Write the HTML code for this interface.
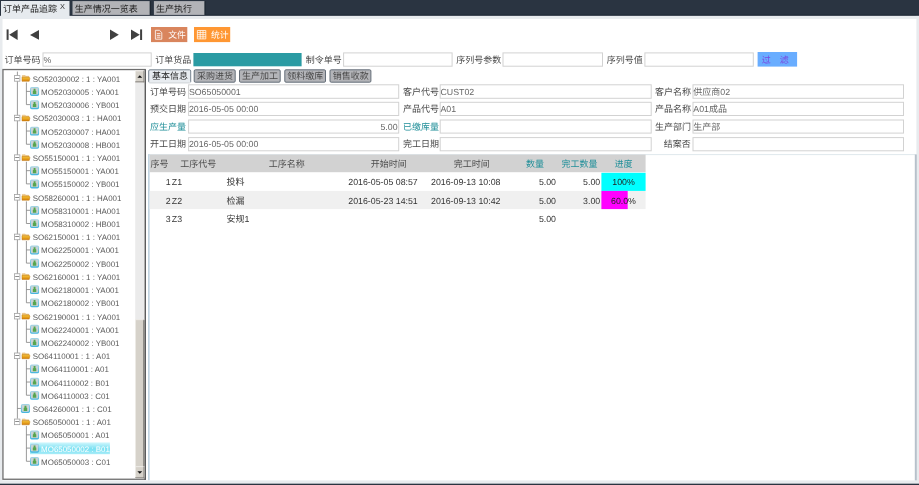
<!DOCTYPE html>
<html lang="zh-CN">
<head>
<meta charset="utf-8">
<title>订单产品追踪</title>
<style>
html,body{margin:0;padding:0}
body{text-rendering:geometricPrecision;width:919px;height:485px;overflow:hidden;position:relative;background:#fff;font-family:"Liberation Sans","Noto Sans CJK SC",sans-serif;font-size:8.8px;color:#494949}
#bg{position:absolute;left:0;top:0;display:block}
#ui{position:absolute;left:0;top:0;width:919px;height:485px;will-change:transform}
.t{position:absolute;white-space:nowrap;line-height:12px;height:12px;margin:0;padding:0}
.c{font-size:9px;font-family:"Liberation Sans","Noto Sans CJK SC",sans-serif}
.c2{font-size:8.8px;font-family:"Liberation Sans","Noto Sans CJK SC",sans-serif}
.tr{font-size:7.94px;color:#5a5a5a;line-height:13px;height:13px}
.sel{color:#fff}
.teal{color:#23909a}
.hd{color:#4e4e4e}
.v{color:#666}

</style>
</head>
<body>
<svg id="bg" width="919" height="485" viewBox="0 0 919 485" aria-hidden="true">
<rect x="0" y="0" width="919" height="485" fill="#fff"/>
<rect x="0" y="0" width="919" height="15.7" fill="#2a3441"/>
<rect x="0" y="15.7" width="919" height="3.2" fill="#e8ebee"/>
<rect x="0" y="15.7" width="2.5" height="467.6" fill="#e8ebee"/>
<rect x="916.4" y="15.7" width="2.6" height="467.6" fill="#e8ebee"/>
<rect x="0" y="14.5" width="919" height="1.2" fill="#212c39"/>
<rect x="0" y="480.4" width="919" height="3.2" fill="#e8ebee"/>
<rect x="0" y="483.8" width="919" height="1.2" fill="#2a3441"/>
<rect x="0" y="483.3" width="919" height="0.5" fill="#8a929b"/>
<rect x="1" y="1" width="68.5" height="18" fill="#e6eaee"/>
<rect x="72.5" y="1.1" width="77.3" height="13.8" fill="#b2b3b7"/>
<rect x="149.8" y="1.1" width="1" height="13.8" fill="#1d2631"/>
<rect x="153.9" y="1.1" width="50.7" height="13.8" fill="#b2b3b7"/>
<rect x="204.6" y="1.1" width="1" height="13.8" fill="#1d2631"/>
<rect x="6.6" y="29.4" width="2" height="10.5" fill="#404040"/>
<path d="M9.2 34.65L17.6 29.4L17.6 39.9Z" fill="#404040"/>
<path d="M30 34.9L39 30L39 39.8Z" fill="#404040"/>
<path d="M118.8 34.8L110 29.6L110 40Z" fill="#404040"/>
<path d="M139.8 34.7L131 29.4L131 40Z" fill="#404040"/>
<rect x="140.1" y="29.4" width="2" height="10.6" fill="#404040"/>
<rect x="151" y="27" width="36.3" height="15.1" fill="#d9855d"/>
<rect x="194" y="27" width="36.2" height="15.1" fill="#ff9733"/>
<path d="M155.4 30.3h4l2.4 2.3v6.6h-6.4zM156.8 33.6h3.6M156.8 35.4h3.6M156.8 37.2h3.6" fill="none" stroke="#fff" stroke-width="0.8"/>
<path d="M197.4 30.5h8.4v8.4h-8.4zM197.4 32.6h8.4M197.4 34.7h8.4M197.4 36.8h8.4M200.2 30.5v8.4M203 30.5v8.4" fill="none" stroke="#fff" stroke-width="0.75"/>
<rect x="43" y="52.9" width="108.2" height="13.3" fill="#fff" stroke="#d2d2d2" stroke-width="1"/>
<rect x="193.4" y="53" width="108.2" height="13.3" fill="#2a9ba3"/>
<rect x="343.6" y="52.9" width="108.5" height="13.3" fill="#fff" stroke="#d2d2d2" stroke-width="1"/>
<rect x="503" y="52.9" width="99.5" height="13.3" fill="#fff" stroke="#d2d2d2" stroke-width="1"/>
<rect x="644.9" y="52.9" width="108.4" height="13.3" fill="#fff" stroke="#d2d2d2" stroke-width="1"/>
<rect x="757.6" y="52" width="39.5" height="14.6" fill="#69adff"/>
<rect x="2.95" y="69.55" width="142.2" height="409.7" fill="#fff" stroke="#6e6e6e" stroke-width="1.3"/>
<rect x="144.5" y="69.4" width="1.5" height="410.5" fill="#5c5c5c"/>
<rect x="135.2" y="70.6" width="9.2" height="407.8" fill="#ebebeb"/>
<rect x="135.2" y="70.6" width="9.2" height="11.7" fill="#d6d2ca"/>
<rect x="135.2" y="70.6" width="9.2" height="0.7" fill="#f4f2ee"/>
<rect x="135.2" y="70.6" width="0.7" height="11.7" fill="#f4f2ee"/>
<rect x="135.2" y="81.4" width="9.2" height="0.9" fill="#7c7a76"/>
<rect x="143.5" y="70.6" width="0.9" height="11.7" fill="#7c7a76"/>
<path d="M137.4 77.85L139.8 75.15L142.2 77.85Z" fill="#111"/>
<rect x="135.2" y="319.4" width="9.2" height="147" fill="#d6d2ca"/>
<rect x="135.2" y="319.4" width="0.7" height="147" fill="#f4f2ee"/>
<rect x="143.5" y="319.4" width="0.9" height="147" fill="#4a4a48"/>
<rect x="135.2" y="319.4" width="9.2" height="0.7" fill="#f4f2ee"/>
<rect x="135.2" y="466.4" width="9.2" height="11.9" fill="#d6d2ca"/>
<rect x="135.2" y="466.4" width="9.2" height="0.7" fill="#f4f2ee"/>
<rect x="135.2" y="466.4" width="0.7" height="11.9" fill="#f4f2ee"/>
<rect x="135.2" y="477.4" width="9.2" height="0.9" fill="#7c7a76"/>
<rect x="143.5" y="466.4" width="0.9" height="11.9" fill="#7c7a76"/>
<path d="M137.4 471.15L139.8 473.85L142.2 471.15Z" fill="#111"/>
<path d="M17.4 71.6L17.4 418.66" stroke="#808080" stroke-width="0.8" fill="none"/>
<defs><linearGradient id="fg" x1="0" y1="0" x2="0" y2="1"><stop offset="0" stop-color="#f8c83c"/><stop offset="1" stop-color="#d67f06"/></linearGradient><linearGradient id="fg2" x1="0" y1="0" x2="0" y2="1"><stop offset="0" stop-color="#fbc85a"/><stop offset="1" stop-color="#e39a1c"/></linearGradient><linearGradient id="mg" x1="0" y1="0" x2="0" y2="1"><stop offset="0" stop-color="#a6d5e5"/><stop offset="1" stop-color="#42b4de"/></linearGradient></defs>
<rect x="14.4" y="75.6" width="5.5" height="5.6" fill="#fff" stroke="#a2a2a2" stroke-width="0.8"/>
<path d="M15.2 78.5L19.2 78.5" stroke="#6e6e6e" stroke-width="0.8" fill="none"/>
<path d="M22.3 75.5h2.9l0.7 0.8h2.9v1.6h-6.5z" fill="#f3cd8c" stroke="#d8a552" stroke-width="0.4"/>
<path d="M22 77.2h7.2l0.7 1.2l-0.7 2.9h-7.2z" fill="url(#fg)" stroke="#bd7714" stroke-width="0.5"/>
<path d="M26.4 82.5L26.4 104.62" stroke="#808080" stroke-width="0.8" fill="none"/>
<path d="M26.4 91.41L30.2 91.41" stroke="#808080" stroke-width="0.8" fill="none"/>
<rect x="30" y="87.06" width="9.1" height="8.9" rx="1.7" fill="url(#mg)"/>
<rect x="31" y="88.01" width="7.1" height="6.6" rx="0.8" fill="#c9d3d7"/>
<path d="M33.6 88.71h1.9v1.8l0.8 0.5v2.9h-3.5v-2.9l0.8 -0.5z" fill="#57a54e"/>
<path d="M26.4 104.62L30.2 104.62" stroke="#808080" stroke-width="0.8" fill="none"/>
<rect x="30" y="100.27" width="9.1" height="8.9" rx="1.7" fill="url(#mg)"/>
<rect x="31" y="101.22" width="7.1" height="6.6" rx="0.8" fill="#c9d3d7"/>
<path d="M33.6 101.92h1.9v1.8l0.8 0.5v2.9h-3.5v-2.9l0.8 -0.5z" fill="#57a54e"/>
<rect x="14.4" y="115.23" width="5.5" height="5.6" fill="#fff" stroke="#a2a2a2" stroke-width="0.8"/>
<path d="M15.2 117.5L19.2 117.5" stroke="#6e6e6e" stroke-width="0.8" fill="none"/>
<path d="M22.3 115.13h2.9l0.7 0.8h2.9v1.6h-6.5z" fill="#f3cd8c" stroke="#d8a552" stroke-width="0.4"/>
<path d="M22 116.83h7.2l0.7 1.2l-0.7 2.9h-7.2z" fill="url(#fg)" stroke="#bd7714" stroke-width="0.5"/>
<path d="M26.4 122.13L26.4 144.25" stroke="#808080" stroke-width="0.8" fill="none"/>
<path d="M26.4 131.04L30.2 131.04" stroke="#808080" stroke-width="0.8" fill="none"/>
<rect x="30" y="126.69" width="9.1" height="8.9" rx="1.7" fill="url(#mg)"/>
<rect x="31" y="127.64" width="7.1" height="6.6" rx="0.8" fill="#c9d3d7"/>
<path d="M33.6 128.34h1.9v1.8l0.8 0.5v2.9h-3.5v-2.9l0.8 -0.5z" fill="#57a54e"/>
<path d="M26.4 144.25L30.2 144.25" stroke="#808080" stroke-width="0.8" fill="none"/>
<rect x="30" y="139.9" width="9.1" height="8.9" rx="1.7" fill="url(#mg)"/>
<rect x="31" y="140.85" width="7.1" height="6.6" rx="0.8" fill="#c9d3d7"/>
<path d="M33.6 141.55h1.9v1.8l0.8 0.5v2.9h-3.5v-2.9l0.8 -0.5z" fill="#57a54e"/>
<rect x="14.4" y="154.86" width="5.5" height="5.6" fill="#fff" stroke="#a2a2a2" stroke-width="0.8"/>
<path d="M15.2 157.5L19.2 157.5" stroke="#6e6e6e" stroke-width="0.8" fill="none"/>
<path d="M22.3 154.76h2.9l0.7 0.8h2.9v1.6h-6.5z" fill="#f3cd8c" stroke="#d8a552" stroke-width="0.4"/>
<path d="M22 156.46h7.2l0.7 1.2l-0.7 2.9h-7.2z" fill="url(#fg)" stroke="#bd7714" stroke-width="0.5"/>
<path d="M26.4 161.76L26.4 183.88" stroke="#808080" stroke-width="0.8" fill="none"/>
<path d="M26.4 170.67L30.2 170.67" stroke="#808080" stroke-width="0.8" fill="none"/>
<rect x="30" y="166.32" width="9.1" height="8.9" rx="1.7" fill="url(#mg)"/>
<rect x="31" y="167.27" width="7.1" height="6.6" rx="0.8" fill="#c9d3d7"/>
<path d="M33.6 167.97h1.9v1.8l0.8 0.5v2.9h-3.5v-2.9l0.8 -0.5z" fill="#57a54e"/>
<path d="M26.4 183.88L30.2 183.88" stroke="#808080" stroke-width="0.8" fill="none"/>
<rect x="30" y="179.53" width="9.1" height="8.9" rx="1.7" fill="url(#mg)"/>
<rect x="31" y="180.48" width="7.1" height="6.6" rx="0.8" fill="#c9d3d7"/>
<path d="M33.6 181.18h1.9v1.8l0.8 0.5v2.9h-3.5v-2.9l0.8 -0.5z" fill="#57a54e"/>
<rect x="14.4" y="194.49" width="5.5" height="5.6" fill="#fff" stroke="#a2a2a2" stroke-width="0.8"/>
<path d="M15.2 197.5L19.2 197.5" stroke="#6e6e6e" stroke-width="0.8" fill="none"/>
<path d="M22.3 194.39h2.9l0.7 0.8h2.9v1.6h-6.5z" fill="#f3cd8c" stroke="#d8a552" stroke-width="0.4"/>
<path d="M22 196.09h7.2l0.7 1.2l-0.7 2.9h-7.2z" fill="url(#fg)" stroke="#bd7714" stroke-width="0.5"/>
<path d="M26.4 201.39L26.4 223.51" stroke="#808080" stroke-width="0.8" fill="none"/>
<path d="M26.4 210.3L30.2 210.3" stroke="#808080" stroke-width="0.8" fill="none"/>
<rect x="30" y="205.95" width="9.1" height="8.9" rx="1.7" fill="url(#mg)"/>
<rect x="31" y="206.9" width="7.1" height="6.6" rx="0.8" fill="#c9d3d7"/>
<path d="M33.6 207.6h1.9v1.8l0.8 0.5v2.9h-3.5v-2.9l0.8 -0.5z" fill="#57a54e"/>
<path d="M26.4 223.51L30.2 223.51" stroke="#808080" stroke-width="0.8" fill="none"/>
<rect x="30" y="219.16" width="9.1" height="8.9" rx="1.7" fill="url(#mg)"/>
<rect x="31" y="220.11" width="7.1" height="6.6" rx="0.8" fill="#c9d3d7"/>
<path d="M33.6 220.81h1.9v1.8l0.8 0.5v2.9h-3.5v-2.9l0.8 -0.5z" fill="#57a54e"/>
<rect x="14.4" y="234.12" width="5.5" height="5.6" fill="#fff" stroke="#a2a2a2" stroke-width="0.8"/>
<path d="M15.2 236.5L19.2 236.5" stroke="#6e6e6e" stroke-width="0.8" fill="none"/>
<path d="M22.3 234.02h2.9l0.7 0.8h2.9v1.6h-6.5z" fill="#f3cd8c" stroke="#d8a552" stroke-width="0.4"/>
<path d="M22 235.72h7.2l0.7 1.2l-0.7 2.9h-7.2z" fill="url(#fg)" stroke="#bd7714" stroke-width="0.5"/>
<path d="M26.4 241.02L26.4 263.14" stroke="#808080" stroke-width="0.8" fill="none"/>
<path d="M26.4 249.93L30.2 249.93" stroke="#808080" stroke-width="0.8" fill="none"/>
<rect x="30" y="245.58" width="9.1" height="8.9" rx="1.7" fill="url(#mg)"/>
<rect x="31" y="246.53" width="7.1" height="6.6" rx="0.8" fill="#c9d3d7"/>
<path d="M33.6 247.23h1.9v1.8l0.8 0.5v2.9h-3.5v-2.9l0.8 -0.5z" fill="#57a54e"/>
<path d="M26.4 263.14L30.2 263.14" stroke="#808080" stroke-width="0.8" fill="none"/>
<rect x="30" y="258.79" width="9.1" height="8.9" rx="1.7" fill="url(#mg)"/>
<rect x="31" y="259.74" width="7.1" height="6.6" rx="0.8" fill="#c9d3d7"/>
<path d="M33.6 260.44h1.9v1.8l0.8 0.5v2.9h-3.5v-2.9l0.8 -0.5z" fill="#57a54e"/>
<rect x="14.4" y="273.75" width="5.5" height="5.6" fill="#fff" stroke="#a2a2a2" stroke-width="0.8"/>
<path d="M15.2 276.5L19.2 276.5" stroke="#6e6e6e" stroke-width="0.8" fill="none"/>
<path d="M22.3 273.65h2.9l0.7 0.8h2.9v1.6h-6.5z" fill="#f3cd8c" stroke="#d8a552" stroke-width="0.4"/>
<path d="M22 275.35h7.2l0.7 1.2l-0.7 2.9h-7.2z" fill="url(#fg)" stroke="#bd7714" stroke-width="0.5"/>
<path d="M26.4 280.65L26.4 302.77" stroke="#808080" stroke-width="0.8" fill="none"/>
<path d="M26.4 289.56L30.2 289.56" stroke="#808080" stroke-width="0.8" fill="none"/>
<rect x="30" y="285.21" width="9.1" height="8.9" rx="1.7" fill="url(#mg)"/>
<rect x="31" y="286.16" width="7.1" height="6.6" rx="0.8" fill="#c9d3d7"/>
<path d="M33.6 286.86h1.9v1.8l0.8 0.5v2.9h-3.5v-2.9l0.8 -0.5z" fill="#57a54e"/>
<path d="M26.4 302.77L30.2 302.77" stroke="#808080" stroke-width="0.8" fill="none"/>
<rect x="30" y="298.42" width="9.1" height="8.9" rx="1.7" fill="url(#mg)"/>
<rect x="31" y="299.37" width="7.1" height="6.6" rx="0.8" fill="#c9d3d7"/>
<path d="M33.6 300.07h1.9v1.8l0.8 0.5v2.9h-3.5v-2.9l0.8 -0.5z" fill="#57a54e"/>
<rect x="14.4" y="313.38" width="5.5" height="5.6" fill="#fff" stroke="#a2a2a2" stroke-width="0.8"/>
<path d="M15.2 316.5L19.2 316.5" stroke="#6e6e6e" stroke-width="0.8" fill="none"/>
<path d="M22.3 313.28h2.9l0.7 0.8h2.9v1.6h-6.5z" fill="#f3cd8c" stroke="#d8a552" stroke-width="0.4"/>
<path d="M22 314.98h7.2l0.7 1.2l-0.7 2.9h-7.2z" fill="url(#fg)" stroke="#bd7714" stroke-width="0.5"/>
<path d="M26.4 320.28L26.4 342.4" stroke="#808080" stroke-width="0.8" fill="none"/>
<path d="M26.4 329.19L30.2 329.19" stroke="#808080" stroke-width="0.8" fill="none"/>
<rect x="30" y="324.84" width="9.1" height="8.9" rx="1.7" fill="url(#mg)"/>
<rect x="31" y="325.79" width="7.1" height="6.6" rx="0.8" fill="#c9d3d7"/>
<path d="M33.6 326.49h1.9v1.8l0.8 0.5v2.9h-3.5v-2.9l0.8 -0.5z" fill="#57a54e"/>
<path d="M26.4 342.4L30.2 342.4" stroke="#808080" stroke-width="0.8" fill="none"/>
<rect x="30" y="338.05" width="9.1" height="8.9" rx="1.7" fill="url(#mg)"/>
<rect x="31" y="339" width="7.1" height="6.6" rx="0.8" fill="#c9d3d7"/>
<path d="M33.6 339.7h1.9v1.8l0.8 0.5v2.9h-3.5v-2.9l0.8 -0.5z" fill="#57a54e"/>
<rect x="14.4" y="353.01" width="5.5" height="5.6" fill="#fff" stroke="#a2a2a2" stroke-width="0.8"/>
<path d="M15.2 355.5L19.2 355.5" stroke="#6e6e6e" stroke-width="0.8" fill="none"/>
<path d="M22.3 352.91h2.9l0.7 0.8h2.9v1.6h-6.5z" fill="#f3cd8c" stroke="#d8a552" stroke-width="0.4"/>
<path d="M22 354.61h7.2l0.7 1.2l-0.7 2.9h-7.2z" fill="url(#fg)" stroke="#bd7714" stroke-width="0.5"/>
<path d="M26.4 359.91L26.4 395.24" stroke="#808080" stroke-width="0.8" fill="none"/>
<path d="M26.4 368.82L30.2 368.82" stroke="#808080" stroke-width="0.8" fill="none"/>
<rect x="30" y="364.47" width="9.1" height="8.9" rx="1.7" fill="url(#mg)"/>
<rect x="31" y="365.42" width="7.1" height="6.6" rx="0.8" fill="#c9d3d7"/>
<path d="M33.6 366.12h1.9v1.8l0.8 0.5v2.9h-3.5v-2.9l0.8 -0.5z" fill="#57a54e"/>
<path d="M26.4 382.03L30.2 382.03" stroke="#808080" stroke-width="0.8" fill="none"/>
<rect x="30" y="377.68" width="9.1" height="8.9" rx="1.7" fill="url(#mg)"/>
<rect x="31" y="378.63" width="7.1" height="6.6" rx="0.8" fill="#c9d3d7"/>
<path d="M33.6 379.33h1.9v1.8l0.8 0.5v2.9h-3.5v-2.9l0.8 -0.5z" fill="#57a54e"/>
<path d="M26.4 395.24L30.2 395.24" stroke="#808080" stroke-width="0.8" fill="none"/>
<rect x="30" y="390.89" width="9.1" height="8.9" rx="1.7" fill="url(#mg)"/>
<rect x="31" y="391.84" width="7.1" height="6.6" rx="0.8" fill="#c9d3d7"/>
<path d="M33.6 392.54h1.9v1.8l0.8 0.5v2.9h-3.5v-2.9l0.8 -0.5z" fill="#57a54e"/>
<path d="M17.4 408.45L21 408.45" stroke="#808080" stroke-width="0.8" fill="none"/>
<rect x="20.9" y="404.1" width="9.1" height="8.9" rx="1.7" fill="url(#mg)"/>
<rect x="21.9" y="405.05" width="7.1" height="6.6" rx="0.8" fill="#c9d3d7"/>
<path d="M24.5 405.75h1.9v1.8l0.8 0.5v2.9h-3.5v-2.9l0.8 -0.5z" fill="#57a54e"/>
<rect x="14.4" y="419.06" width="5.5" height="5.6" fill="#fff" stroke="#a2a2a2" stroke-width="0.8"/>
<path d="M15.2 421.5L19.2 421.5" stroke="#6e6e6e" stroke-width="0.8" fill="none"/>
<path d="M22.3 418.96h2.9l0.7 0.8h2.9v1.6h-6.5z" fill="#f3cd8c" stroke="#d8a552" stroke-width="0.4"/>
<path d="M22 420.66h7.2l0.7 1.2l-0.7 2.9h-7.2z" fill="url(#fg)" stroke="#bd7714" stroke-width="0.5"/>
<path d="M26.4 425.96L26.4 461.29" stroke="#808080" stroke-width="0.8" fill="none"/>
<path d="M26.4 434.87L30.2 434.87" stroke="#808080" stroke-width="0.8" fill="none"/>
<rect x="30" y="430.52" width="9.1" height="8.9" rx="1.7" fill="url(#mg)"/>
<rect x="31" y="431.47" width="7.1" height="6.6" rx="0.8" fill="#c9d3d7"/>
<path d="M33.6 432.17h1.9v1.8l0.8 0.5v2.9h-3.5v-2.9l0.8 -0.5z" fill="#57a54e"/>
<path d="M26.4 448.08L30.2 448.08" stroke="#808080" stroke-width="0.8" fill="none"/>
<rect x="30" y="442.38" width="79.9" height="11.8" fill="url(#sg)"/>
<rect x="30" y="443.73" width="9.1" height="8.9" rx="1.7" fill="url(#mg)"/>
<rect x="31" y="444.68" width="7.1" height="6.6" rx="0.8" fill="#c9d3d7"/>
<path d="M33.6 445.38h1.9v1.8l0.8 0.5v2.9h-3.5v-2.9l0.8 -0.5z" fill="#57a54e"/>
<path d="M26.4 461.29L30.2 461.29" stroke="#808080" stroke-width="0.8" fill="none"/>
<rect x="30" y="456.94" width="9.1" height="8.9" rx="1.7" fill="url(#mg)"/>
<rect x="31" y="457.89" width="7.1" height="6.6" rx="0.8" fill="#c9d3d7"/>
<path d="M33.6 458.59h1.9v1.8l0.8 0.5v2.9h-3.5v-2.9l0.8 -0.5z" fill="#57a54e"/>
<defs><linearGradient id="sg" x1="0" y1="0" x2="0" y2="1"><stop offset="0" stop-color="#d2f7fd"/><stop offset="0.55" stop-color="#78e0f2"/><stop offset="1" stop-color="#a8ecf8"/></linearGradient></defs>
<rect x="148.7" y="69.8" width="42" height="13.1" fill="#e8ecf0" stroke="#76828e" stroke-width="1" rx="1.2"/>
<rect x="148" y="82.4" width="43.4" height="1.2" fill="#fff"/>
<rect x="194.2" y="69.8" width="41" height="12.4" fill="#b3b4b8" stroke="#656e79" stroke-width="1" rx="1.2"/>
<rect x="239.5" y="69.8" width="40.7" height="12.4" fill="#b3b4b8" stroke="#656e79" stroke-width="1" rx="1.2"/>
<rect x="284.8" y="69.8" width="40.7" height="12.4" fill="#b3b4b8" stroke="#656e79" stroke-width="1" rx="1.2"/>
<rect x="330" y="69.8" width="40.9" height="12.4" fill="#b3b4b8" stroke="#656e79" stroke-width="1" rx="1.2"/>
<rect x="188.6" y="84.8" width="210.1" height="13.5" fill="#fff" stroke="#d2d2d2" stroke-width="1"/>
<rect x="440.2" y="84.8" width="211" height="13.5" fill="#fff" stroke="#d2d2d2" stroke-width="1"/>
<rect x="693" y="84.8" width="210.5" height="13.5" fill="#fff" stroke="#d2d2d2" stroke-width="1"/>
<rect x="188.6" y="102.3" width="210.1" height="13.2" fill="#fff" stroke="#d2d2d2" stroke-width="1"/>
<rect x="440.2" y="102.3" width="211" height="13.2" fill="#fff" stroke="#d2d2d2" stroke-width="1"/>
<rect x="693" y="102.3" width="210.5" height="13.2" fill="#fff" stroke="#d2d2d2" stroke-width="1"/>
<rect x="188.6" y="120" width="210.1" height="13.1" fill="#fff" stroke="#d2d2d2" stroke-width="1"/>
<rect x="440.2" y="120" width="211" height="13.1" fill="#fff" stroke="#d2d2d2" stroke-width="1"/>
<rect x="693" y="120" width="210.5" height="13.1" fill="#fff" stroke="#d2d2d2" stroke-width="1"/>
<rect x="188.6" y="137.6" width="210.1" height="13.2" fill="#fff" stroke="#d2d2d2" stroke-width="1"/>
<rect x="440.2" y="137.6" width="211" height="13.2" fill="#fff" stroke="#d2d2d2" stroke-width="1"/>
<rect x="693" y="137.6" width="210.5" height="13.2" fill="#fff" stroke="#d2d2d2" stroke-width="1"/>
<rect x="148.4" y="154.2" width="767" height="0.9" fill="#dbe5ea"/>
<rect x="914.8" y="154.4" width="2" height="326" fill="#b7c1cb"/>
<rect x="148.1" y="154.2" width="1.5" height="326" fill="#bbd0de"/>
<rect x="149.7" y="154.6" width="495.9" height="17.6" fill="#d2d2d2"/>
<rect x="149.7" y="190.9" width="495.9" height="18.2" fill="#f0f0f0"/>
<rect x="601.4" y="172.8" width="44.2" height="18.1" fill="#00ffff"/>
<rect x="601.4" y="190.9" width="26.3" height="18.2" fill="#ff00ff"/>
</svg>
<div id="ui">
<div id="wintabs" role="tablist">
<div class="t" style="left:3.1px;top:3px;color:#222"><span class="c">订单产品追踪</span></div>
<div class="t" style="left:59.9px;top:0px;line-height:13px;height:13px;font-size:7.4px;color:#333">X</div>
<div class="t" style="left:74.7px;top:3px;color:#222"><span class="c">生产情况一览表</span></div>
<div class="t" style="left:156px;top:3px;color:#222"><span class="c">生产执行</span></div>
</div>
<div id="toolbar" role="toolbar">
<div class="t" style="left:168.2px;top:29px;color:#fff"><span class="c2">文件</span></div>
<div class="t" style="left:211px;top:29px;color:#fff"><span class="c2">统计</span></div>
</div>
<div id="filter">
<div class="t" style="left:4.6px;top:54px;"><span class="c">订单号码</span></div>
<div class="t v" style="left:43.6px;top:54px;">%</div>
<div class="t" style="left:155.3px;top:54px;"><span class="c">订单货品</span></div>
<div class="t" style="left:305.7px;top:54px;"><span class="c">制令单号</span></div>
<div class="t" style="left:456.2px;top:54px;"><span class="c">序列号参数</span></div>
<div class="t" style="left:606.7px;top:54px;"><span class="c">序列号值</span></div>
<div class="t" style="left:760.9px;top:54px;color:#7a48e0"><span class="c" style="padding-left:0.9px">过　滤</span></div>
</div>
<div id="tree" role="tree">
<div class="t tr" style="left:32.7px;top:73px;">SO52030002 : 1 : YA001</div>
<div class="t tr" style="left:41.1px;top:86px;">MO52030005 : YA001</div>
<div class="t tr" style="left:41.1px;top:99px;">MO52030006 : YB001</div>
<div class="t tr" style="left:32.7px;top:112px;">SO52030003 : 1 : HA001</div>
<div class="t tr" style="left:41.1px;top:126px;">MO52030007 : HA001</div>
<div class="t tr" style="left:41.1px;top:139px;">MO52030008 : HB001</div>
<div class="t tr" style="left:32.7px;top:152px;">SO55150001 : 1 : YA001</div>
<div class="t tr" style="left:41.1px;top:165px;">MO55150001 : YA001</div>
<div class="t tr" style="left:41.1px;top:178px;">MO55150002 : YB001</div>
<div class="t tr" style="left:32.7px;top:192px;">SO58260001 : 1 : HA001</div>
<div class="t tr" style="left:41.1px;top:205px;">MO58310001 : HA001</div>
<div class="t tr" style="left:41.1px;top:218px;">MO58310002 : HB001</div>
<div class="t tr" style="left:32.7px;top:231px;">SO62150001 : 1 : YA001</div>
<div class="t tr" style="left:41.1px;top:244px;">MO62250001 : YA001</div>
<div class="t tr" style="left:41.1px;top:258px;">MO62250002 : YB001</div>
<div class="t tr" style="left:32.7px;top:271px;">SO62160001 : 1 : YA001</div>
<div class="t tr" style="left:41.1px;top:284px;">MO62180001 : YA001</div>
<div class="t tr" style="left:41.1px;top:297px;">MO62180002 : YB001</div>
<div class="t tr" style="left:32.7px;top:311px;">SO62190001 : 1 : YA001</div>
<div class="t tr" style="left:41.1px;top:324px;">MO62240001 : YA001</div>
<div class="t tr" style="left:41.1px;top:337px;">MO62240002 : YB001</div>
<div class="t tr" style="left:32.7px;top:350px;">SO64110001 : 1 : A01</div>
<div class="t tr" style="left:41.1px;top:363px;">MO64110001 : A01</div>
<div class="t tr" style="left:41.1px;top:377px;">MO64110002 : B01</div>
<div class="t tr" style="left:41.1px;top:390px;">MO64110003 : C01</div>
<div class="t tr" style="left:32.7px;top:403px;">SO64260001 : 1 : C01</div>
<div class="t tr" style="left:32.7px;top:416px;">SO65050001 : 1 : A01</div>
<div class="t tr" style="left:41.1px;top:429px;">MO65050001 : A01</div>
<div class="t tr sel" style="left:41.1px;top:443px;">MO65050002 : B01</div>
<div class="t tr" style="left:41.1px;top:456px;">MO65050003 : C01</div>
</div>
<div id="tabs" role="tablist">
<div class="t" style="left:151.9px;top:70px;color:#1c1c1c"><span class="c">基本信息</span></div>
<div class="t" style="left:196.9px;top:70px;color:#484848"><span class="c">采购进货</span></div>
<div class="t" style="left:242.05px;top:70px;color:#484848"><span class="c">生产加工</span></div>
<div class="t" style="left:287.35px;top:70px;color:#484848"><span class="c">领料缴库</span></div>
<div class="t" style="left:332.65px;top:70px;color:#484848"><span class="c">销售收款</span></div>
</div>
<div id="form">
<div class="t" style="left:150.1px;top:86px;"><span class="c">订单号码</span></div>
<div class="t v" style="left:188.9px;top:86px;">SO65050001</div>
<div class="t" style="left:402.9px;top:86px;"><span class="c">客户代号</span></div>
<div class="t v" style="left:440.5px;top:86px;">CUST02</div>
<div class="t" style="left:654.9px;top:86px;"><span class="c">客户名称</span></div>
<div class="t v" style="left:693.3px;top:86px;"><span class="c">供应商</span>02</div>
<div class="t" style="left:150.1px;top:103px;"><span class="c">预交日期</span></div>
<div class="t v" style="left:188.9px;top:103px;">2016-05-05 00:00</div>
<div class="t" style="left:402.9px;top:103px;"><span class="c">产品代号</span></div>
<div class="t v" style="left:440.5px;top:103px;">A01</div>
<div class="t" style="left:654.9px;top:103px;"><span class="c">产品名称</span></div>
<div class="t v" style="left:693.3px;top:103px;">A01<span class="c">成品</span></div>
<div class="t teal" style="left:150.1px;top:121px;"><span class="c">应生产量</span></div>
<div class="t v" style="left:188.1px;top:121px;width:209.5px;text-align:right;">5.00</div>
<div class="t teal" style="left:402.9px;top:121px;"><span class="c">已缴库量</span></div>
<div class="t" style="left:654.9px;top:121px;"><span class="c">生产部门</span></div>
<div class="t v" style="left:693.3px;top:121px;"><span class="c">生产部</span></div>
<div class="t" style="left:150.1px;top:138px;"><span class="c">开工日期</span></div>
<div class="t v" style="left:188.9px;top:138px;">2016-05-05 00:00</div>
<div class="t" style="left:402.9px;top:138px;"><span class="c">完工日期</span></div>
<div class="t" style="left:663.8px;top:138px;"><span class="c">结案否</span></div>
</div>
<div id="grid" role="grid">
<div class="t hd" style="left:150.6px;top:158px;"><span class="c">序号</span></div>
<div class="t hd" style="left:180.3px;top:158px;"><span class="c">工序代号</span></div>
<div class="t hd" style="left:268.7px;top:158px;"><span class="c">工序名称</span></div>
<div class="t hd" style="left:370.7px;top:158px;"><span class="c">开始时间</span></div>
<div class="t hd" style="left:453.7px;top:158px;"><span class="c">完工时间</span></div>
<div class="t teal" style="left:526.1px;top:158px;"><span class="c">数量</span></div>
<div class="t teal" style="left:561.4px;top:158px;"><span class="c">完工数量</span></div>
<div class="t teal" style="left:614.6px;top:158px;"><span class="c">进度</span></div>
<div class="t" style="left:149.7px;top:176px;width:20.9px;text-align:right;color:#333">1</div>
<div class="t" style="left:171.8px;top:176px;color:#333">Z1</div>
<div class="t" style="left:226.6px;top:176px;color:#333"><span class="c">投料</span></div>
<div class="t" style="left:348.3px;top:176px;color:#333">2016-05-05 08:57</div>
<div class="t" style="left:431px;top:176px;color:#333">2016-09-13 10:08</div>
<div class="t" style="left:513px;top:176px;width:43px;text-align:right;color:#333">5.00</div>
<div class="t" style="left:557px;top:176px;width:43.2px;text-align:right;color:#333">5.00</div>
<div class="t" style="left:601.4px;top:176px;width:44.2px;text-align:center;color:#222">100%</div>
<div class="t" style="left:149.7px;top:195px;width:20.9px;text-align:right;color:#333">2</div>
<div class="t" style="left:171.8px;top:195px;color:#333">Z2</div>
<div class="t" style="left:226.6px;top:195px;color:#333"><span class="c">检漏</span></div>
<div class="t" style="left:348.3px;top:195px;color:#333">2016-05-23 14:51</div>
<div class="t" style="left:431px;top:195px;color:#333">2016-09-13 10:42</div>
<div class="t" style="left:513px;top:195px;width:43px;text-align:right;color:#333">5.00</div>
<div class="t" style="left:557px;top:195px;width:43.2px;text-align:right;color:#333">3.00</div>
<div class="t" style="left:601.4px;top:195px;width:44.2px;text-align:center;color:#222">60.0%</div>
<div class="t" style="left:149.7px;top:213px;width:20.9px;text-align:right;color:#333">3</div>
<div class="t" style="left:171.8px;top:213px;color:#333">Z3</div>
<div class="t" style="left:226.6px;top:213px;color:#333"><span class="c">安规</span>1</div>
<div class="t" style="left:513px;top:213px;width:43px;text-align:right;color:#333">5.00</div>
</div>
</div>
</body>
</html>
